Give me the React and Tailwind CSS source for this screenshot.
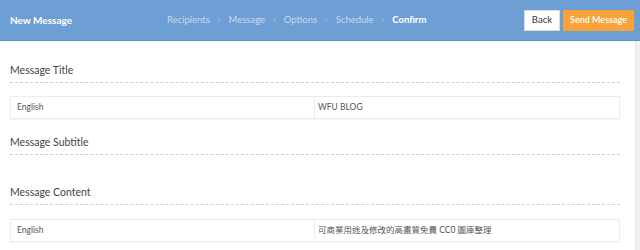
const steps = ["Recipients", "Message", "Options", "Schedule", "Confirm"];

const Row = ({ label, value }) => (
  <div className="flex border border-[#ececec] h-[23px] text-[8.5px] text-[#555] shadow-[0_1px_1px_rgba(0,0,0,0.04)]">
    <div className="w-[304px] border-r border-[#ececec] flex items-center pl-[6px]">{label}</div>
    <div className="flex-1 flex items-center pl-[3px]">{value}</div>
  </div>
);

const Section = ({ title, children, className = "" }) => (
  <div className={className}>
    <div className="text-[10.5px] leading-[12px] text-[#444] pb-[6px]">{title}</div>
    <div className="border-t border-dashed border-[#cfcfcf]" />
    {children}
  </div>
);

export default function App() {
  return (
    <div className="w-[640px] h-[250px] overflow-hidden bg-white flex flex-col font-['Lato','Noto_Sans_CJK_TC',sans-serif]">
      <div className="h-[41px] shrink-0 bg-[#6d9fd4] border-b border-[#5f8fc4] flex items-center px-[10px]">
        <div className="text-white font-bold text-[10px] w-[157px]">New Message</div>
        <div className="flex items-center gap-[7px] text-[9.5px] text-[#c9daf0]">
          {steps.map((s, i) => (
            <div key={s} className="flex items-center gap-[7px]">
              {i > 0 && <span className="text-[#a9c3e6] text-[8px]">&gt;</span>}
              <span className={i === 4 ? "text-white font-bold" : ""}>{s}</span>
            </div>
          ))}
        </div>
        <div className="ml-auto flex gap-[3px] mr-[-4px]">
          <button className="h-[21px] px-[7px] bg-white text-[#333] text-[9.5px] border border-[#dcdcdc]">Back</button>
          <button className="h-[21px] w-[71px] bg-[#f8a23a] text-white text-[9px] font-semibold">Send Message</button>
        </div>
      </div>
      <div className="flex flex-1">
        <div className="flex-1 pl-[10px] pr-[15px] pt-[23px]">
          <Section title="Message Title">
            <div className="mt-[13px]">
              <Row label="English" value="WFU BLOG" />
            </div>
          </Section>
          <Section title="Message Subtitle" className="mt-[17px]" />
          <Section title="Message Content" className="mt-[31px]">
            <div className="mt-[14px]">
              <Row label="English" value="可商業用途及修改的高畫質免費 CC0 圖庫整理" />
            </div>
          </Section>
        </div>
        <div className="w-[5px] bg-[#f1f1f1] border-l border-[#e2e2e2]" />
      </div>
    </div>
  );
}
